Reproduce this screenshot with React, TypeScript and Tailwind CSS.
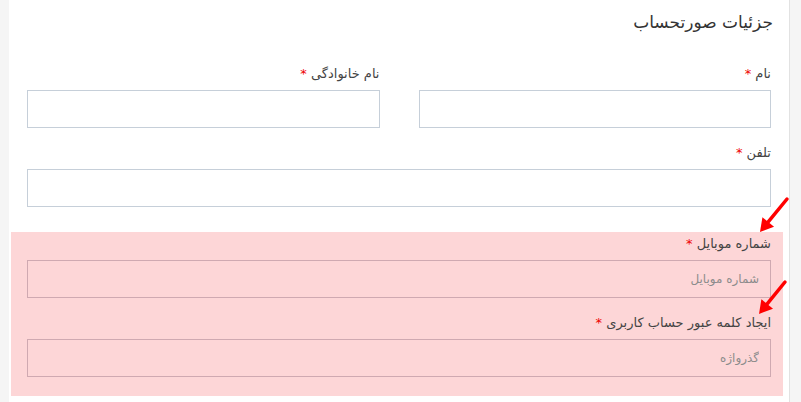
const Field = ({
  label,
  placeholder,
  tone = 'white',
}: {
  label: string;
  placeholder?: string;
  tone?: 'white' | 'pink';
}) => (
  <div className="mb-[15px]">
    <label className="block text-[13px] leading-[20px] text-[#444] mb-[6px]">
      {label} <span className="text-[#e00]">*</span>
    </label>
    <input
      placeholder={placeholder}
      className={
        tone === 'pink'
          ? 'block w-full h-[38px] px-[11px] bg-transparent border border-[#cfa9b1] text-[12px] outline-none placeholder:text-[#8c8c8c]'
          : 'block w-full h-[38px] px-[11px] bg-white border border-[#c6cfd9] text-[12px] outline-none placeholder:text-[#8c8c8c]'
      }
    />
  </div>
);

const Arrow = ({ x1, y1, x2, y2 }: { x1: number; y1: number; x2: number; y2: number }) => {
  const dx = x2 - x1;
  const dy = y2 - y1;
  const len = Math.hypot(dx, dy);
  const ux = dx / len;
  const uy = dy / len;
  const bx = x2 - ux * 13;
  const by = y2 - uy * 13;
  return (
    <g>
      <line x1={x1} y1={y1} x2={bx} y2={by} stroke="#f00" strokeWidth={3.5} strokeLinecap="round" />
      <polygon
        points={`${x2},${y2} ${bx - uy * 7.5},${by + ux * 7.5} ${bx + uy * 7.5},${by - ux * 7.5}`}
        fill="#f00"
      />
    </g>
  );
};

export default function App() {
  return (
    <div className="relative flex w-[801px] h-[402px] overflow-hidden bg-[#f5f5f5] font-['DejaVu_Sans',sans-serif]">
      <div className="w-[9px] shrink-0 bg-[#f5f5f5]" />
      <div dir="rtl" className="w-[780px] shrink-0 bg-white px-[18px] pt-[8px]">
        <h2 className="text-[17px] leading-[28px] text-[#333] mr-[-2px]">جزئیات صورتحساب</h2>
        <div className="mt-[28px] grid grid-cols-2 gap-x-[39px]">
          <Field label="نام" />
          <Field label="نام خانوادگی" />
        </div>
        <Field label="تلفن" />
        <div className="mt-[25px] mr-[-12px] ml-[-16px] pr-[12px] pl-[16px] pt-[2px] pb-[4px] bg-[#fdd6d7]">
          <Field label="شماره موبایل" placeholder="شماره موبایل" tone="pink" />
          <Field label="ایجاد کلمه عبور حساب کاربری" placeholder="گذرواژه" tone="pink" />
        </div>
      </div>
      <div className="flex-1 border-l border-[#e2e2e2] bg-[#f5f5f5]" />
      <svg className="absolute inset-0 pointer-events-none" width={801} height={402}>
        <Arrow x1={787} y1={199} x2={760} y2={232} />
        <Arrow x1={785} y1={282} x2={759} y2={314} />
      </svg>
    </div>
  );
}
